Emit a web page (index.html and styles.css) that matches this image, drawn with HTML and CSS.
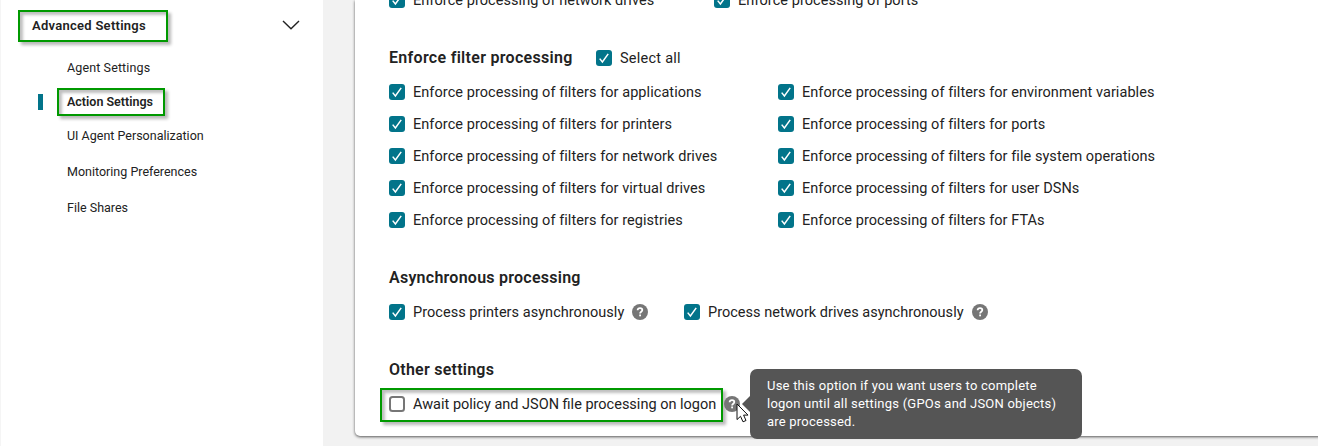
FILE: index.html
```
<!DOCTYPE html>
<html lang="en">
<head>
<meta charset="utf-8">
<title>Advanced Settings</title>
<link rel="stylesheet" href="styles.css">
</head>
<body>
<svg class="defs" width="0" height="0">
  <symbol id="check" viewBox="0 0 16 16"><rect width="16" height="16" rx="3" fill="#02748a"/><path d="M3.7 8.6 6.4 12 12.2 3.9" fill="none" stroke="#fff" stroke-width="1.5"/></symbol>
  <symbol id="empty" viewBox="0 0 16 16"><rect x="1" y="1" width="14" height="14" rx="2.5" fill="#fff" stroke="#767676" stroke-width="2"/></symbol>
  <symbol id="help" viewBox="0 0 16 16"><circle cx="8" cy="8" r="8" fill="#767676"/><path d="M5.6 6.3C5.7 4.9 6.7 4.2 8 4.2s2.3.7 2.3 1.8c0 1.7-2.2 1.7-2.2 3.5" fill="none" stroke="#fff" stroke-width="1.8"/><rect x="7.2" y="10.5" width="1.8" height="1.8" fill="#fff"/></symbol>
</svg>
<div class="page">
  <nav class="sidebar">
    <div class="group">
      <div class="marked group-title">Advanced Settings</div>
      <svg class="chevron" viewBox="0 0 18 10"><path d="M1 1 9 8.7 17 1" fill="none" stroke="#222" stroke-width="1.4"/></svg>
    </div>
    <div class="item first">Agent Settings</div>
    <div class="item active"><span class="bar"></span><span class="marked active-label">Action Settings</span></div>
    <div class="item ui">UI Agent Personalization</div>
    <div class="item">Monitoring Preferences</div>
    <div class="item">File Shares</div>
  </nav>
  <main class="card">
    <div class="row top">
      <label class="opt top-left"><svg><use href="#check"/></svg><span>Enforce processing of network drives</span></label>
      <label class="opt"><svg><use href="#check"/></svg><span>Enforce processing of ports</span></label>
    </div>
    <div class="row head">
      <h2 class="h-filter">Enforce filter processing</h2>
      <label class="opt select"><svg><use href="#check"/></svg><span>Select all</span></label>
    </div>
    <div class="grid">
      <label class="opt"><svg><use href="#check"/></svg><span>Enforce processing of filters for applications</span></label>
      <label class="opt"><svg><use href="#check"/></svg><span>Enforce processing of filters for environment variables</span></label>
      <label class="opt"><svg><use href="#check"/></svg><span>Enforce processing of filters for printers</span></label>
      <label class="opt"><svg><use href="#check"/></svg><span>Enforce processing of filters for ports</span></label>
      <label class="opt"><svg><use href="#check"/></svg><span>Enforce processing of filters for network drives</span></label>
      <label class="opt"><svg><use href="#check"/></svg><span>Enforce processing of filters for file system operations</span></label>
      <label class="opt"><svg><use href="#check"/></svg><span>Enforce processing of filters for virtual drives</span></label>
      <label class="opt"><svg><use href="#check"/></svg><span>Enforce processing of filters for user DSNs</span></label>
      <label class="opt"><svg><use href="#check"/></svg><span>Enforce processing of filters for registries</span></label>
      <label class="opt"><svg><use href="#check"/></svg><span>Enforce processing of filters for FTAs</span></label>
    </div>
    <h2 class="h-async">Asynchronous processing</h2>
    <div class="row async">
      <label class="opt printers"><svg><use href="#check"/></svg><span>Process printers asynchronously</span><svg><use href="#help"/></svg></label>
      <label class="opt drives"><svg><use href="#check"/></svg><span>Process network drives asynchronously</span><svg><use href="#help"/></svg></label>
    </div>
    <h2 class="h-other">Other settings</h2>
    <div class="row other">
      <label class="opt marked await"><svg><use href="#empty"/></svg><span>Await policy and JSON file processing on logon</span></label>
      <div class="help">
        <svg class="help-icon"><use href="#help"/></svg>
        <div class="tooltip">Use this option if you want users to complete<br>logon until all settings (GPOs and JSON objects)<br>are processed.</div>
        <svg class="cursor" viewBox="0 0 13 20"><path d="M1 1V16.6L4.5 13.3 7 18.8 10 17.5 7.6 12.1H12Z" fill="#fff" stroke="#111" stroke-width="1"/></svg>
      </div>
    </div>
  </main>
</div>
</body>
</html>
```
FILE: styles.css
```
* { box-sizing: border-box; }
body { margin: 0; background: #f2f2f2; color: #222; font-family: Roboto, "Noto Sans", sans-serif; overflow: hidden; }
.defs { display: block; }
.page { display: flex; height: 446px; gap: 32px; overflow: hidden; }
.sidebar { width: 323px; flex: none; height: 446px; background: #fff; border-left: 1px solid #f5f5f5; padding: 10px 0 0 17px; font-size: 12.5px; }
.marked { border: 2px solid #090; box-shadow: 3px 3px 3px rgba(0,0,0,.28), inset 3px 3px 3px rgba(0,0,0,.25); }
.group { display: flex; align-items: center; height: 32px; }
.group-title { width: 150px; height: 32px; line-height: 28px; padding-left: 12px; font-weight: 600; font-size: 13px; letter-spacing: .27px; white-space: nowrap; }
.chevron { width: 18px; height: 10px; margin: -2px 0 0 114px; }
.item { height: 36px; line-height: 36px; padding-left: 49px; white-space: nowrap; }
.item.first { margin-top: 8px; height: 36px; letter-spacing: .12px; }
.item.active { display: flex; align-items: center; height: 32px; line-height: 24px; padding-left: 20px; }
.bar { width: 5px; height: 16px; background: #02748a; margin-right: 14px; }
.active-label { width: 108px; height: 28px; padding-left: 8px; font-weight: 600; font-size: 12.5px; letter-spacing: 0; }
.card { flex: 1; height: 436px; margin-right: -10px; background: #fff; border-radius: 0 0 0 5px; box-shadow: 0 1px 3px rgba(0,0,0,.65); padding-left: 34px; }
.row { display: flex; align-items: center; }
.opt { display: flex; align-items: center; gap: 8px; height: 32px; font-size: 14.5px; white-space: nowrap; letter-spacing: .06px; }
.opt svg, .help-icon { width: 16px; height: 16px; flex: none; display: block; }
.top { margin-top: -16px; }
.top-left { width: 325px; }
.select { letter-spacing: .25px; }
h2 { margin: 0; height: 32px; line-height: 32px; font-size: 16px; font-weight: 600; white-space: nowrap; letter-spacing: .25px; }
.head { margin-top: 26px; height: 32px; }
.h-filter { width: 207px; letter-spacing: .3px; }
.grid { display: grid; grid-template-columns: 389px 1fr; margin-top: 2px; }
.h-async { margin-top: 26px; }
.async { margin-top: 2px; }
.printers { width: 295px; letter-spacing: .04px; }
.drives { letter-spacing: .02px; }
.h-other { margin-top: 26px; }
.other { margin-top: 2px; height: 34px; }
.await { width: 343px; height: 34px; margin-left: -9px; padding: 0 0 3px 7px; letter-spacing: 0; }
.await span { padding-top: 1px; }
.help { position: relative; height: 16px; margin: -3px 0 0 1px; }
.tooltip { position: absolute; left: 26px; top: -27px; width: 332px; height: 70px; border-radius: 7px; background: #555; color: #fff; padding: 8px 17px; font-size: 13px; font-weight: 400; line-height: 18px; letter-spacing: .22px; white-space: nowrap; }
.tooltip::before { content: ""; position: absolute; left: -8px; top: 27px; border: 8px solid transparent; border-left: 0; border-right-color: #555; }
.cursor { position: absolute; left: 12px; top: 7px; width: 13px; height: 20px; }
```
